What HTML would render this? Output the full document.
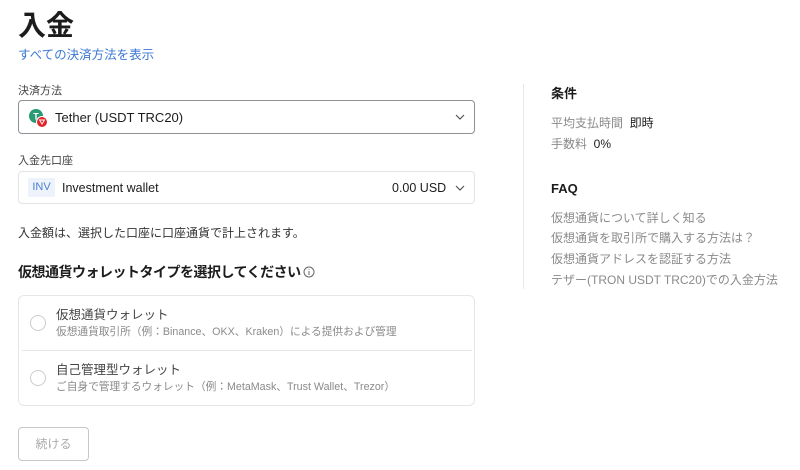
<!DOCTYPE html>
<html><head><meta charset="utf-8"><style>
*{margin:0;padding:0;box-sizing:border-box}
body{width:800px;height:470px;background:#fff;font-family:"Liberation Sans","Noto Sans CJK JP",sans-serif;color:#1c1c1c;position:relative;overflow:hidden}
.a{position:absolute;white-space:nowrap}
.box{position:absolute;left:18px;width:457px;border-radius:4px}
.g{color:#8a8a8a}
</style></head><body>
<div class="a" style="left:18px;top:6px;font-size:28px;font-weight:bold;line-height:40px">入金</div>
<div class="a" style="left:18px;top:46px;font-size:12.5px;color:#3a78d6;line-height:18px">すべての決済方法を表示</div>
<div class="a" style="left:18px;top:83px;font-size:11px;color:#444;line-height:16px">決済方法</div>
<div class="box" style="top:100px;height:34px;border:1px solid #8d9196">
  <svg class="a" style="left:9px;top:7px" width="20" height="20" viewBox="0 0 20 20"><circle cx="8" cy="8" r="7" fill="#2a9a72"/><text x="8" y="11.5" font-size="9" fill="#fff" text-anchor="middle" font-family="Liberation Sans" font-weight="bold">T</text><circle cx="14" cy="14" r="5.5" fill="#e0262c" stroke="#fff" stroke-width="1"/><path d="M11.5 12l5 0-2.5 4z" fill="none" stroke="#fff" stroke-width=".9"/></svg>
  <div class="a" style="left:36px;top:8px;font-size:13px;line-height:17px">Tether (USDT TRC20)</div>
  <svg class="a" style="left:436px;top:12px" width="10" height="8"><path d="M1 2l4 4 4-4" fill="none" stroke="#555" stroke-width="1.2"/></svg>
</div>
<div class="a" style="left:18px;top:153px;font-size:11px;color:#444;line-height:16px">入金先口座</div>
<div class="box" style="top:171px;height:33px;border:1px solid #e3e3e3">
  <div class="a" style="left:9px;top:6px;width:27px;height:19px;background:#eef3fb;color:#4a7fd0;font-size:11px;line-height:19px;text-align:center">INV</div>
  <div class="a" style="left:43px;top:8px;font-size:12.5px;line-height:16px">Investment wallet</div>
  <div class="a" style="left:373px;top:8px;font-size:12.5px;line-height:16px">0.00 USD</div>
  <svg class="a" style="left:436px;top:12px" width="10" height="8"><path d="M1 2l4 4 4-4" fill="none" stroke="#555" stroke-width="1.2"/></svg>
</div>
<div class="a" style="left:18px;top:225px;font-size:12px;color:#333;line-height:17px">入金額は、選択した口座に口座通貨で計上されます。</div>
<div class="a" style="left:18px;top:262px;font-size:14px;font-weight:bold;line-height:20px;letter-spacing:-0.5px">仮想通貨ウォレットタイプを選択してください</div>
<svg class="a" style="left:303px;top:266px" width="12" height="12"><circle cx="6" cy="6" r="5" fill="none" stroke="#666"/><path d="M6 5v4M6 3.2v.8" stroke="#666"/></svg>
<div class="box" style="top:295px;height:111px;border:1px solid #e6e6e6;border-radius:6px">
  <div class="a" style="left:11px;top:19px;width:16px;height:16px;border:1px solid #ccc;border-radius:50%"></div>
  <div class="a" style="left:37px;top:11px;font-size:12.5px;color:#444;line-height:17px">仮想通貨ウォレット</div>
  <div class="a g" style="left:37px;top:29px;font-size:10.7px;line-height:15px">仮想通貨取引所（例：Binance、OKX、Kraken）による提供および管理</div>
  <div class="a" style="left:3px;top:54px;width:450px;height:1px;background:#e6e6e6"></div>
  <div class="a" style="left:11px;top:74px;width:16px;height:16px;border:1px solid #ccc;border-radius:50%"></div>
  <div class="a" style="left:37px;top:66px;font-size:12.5px;color:#444;line-height:17px">自己管理型ウォレット</div>
  <div class="a g" style="left:37px;top:84px;font-size:10.7px;line-height:15px">ご自身で管理するウォレット（例：MetaMask、Trust Wallet、Trezor）</div>
</div>
<div class="a" style="left:18px;top:427px;width:71px;height:34px;border:1px solid #c8c8c8;border-radius:4px;color:#aaa;font-size:12px;line-height:32px;text-align:center">続ける</div>
<div class="a" style="left:523px;top:84px;width:1px;height:205px;background:#e8e8e8"></div>
<div class="a" style="left:551px;top:85px;font-size:13px;font-weight:bold;line-height:18px">条件</div>
<div class="a" style="left:551px;top:115px;font-size:12px;line-height:17px"><span class="g">平均支払時間</span>&nbsp; 即時</div>
<div class="a" style="left:551px;top:136px;font-size:12px;line-height:17px"><span class="g">手数料</span>&nbsp; 0%</div>
<div class="a" style="left:551px;top:180px;font-size:13px;font-weight:bold;line-height:18px">FAQ</div>
<div class="a g" style="left:551px;top:210px;font-size:12px;line-height:17px">仮想通貨について詳しく知る</div>
<div class="a g" style="left:551px;top:230px;font-size:12px;line-height:17px">仮想通貨を取引所で購入する方法は？</div>
<div class="a g" style="left:551px;top:251px;font-size:12px;line-height:17px">仮想通貨アドレスを認証する方法</div>
<div class="a g" style="left:551px;top:272px;font-size:12px;line-height:17px">テザー(TRON USDT TRC20)での入金方法</div>
</body></html>
